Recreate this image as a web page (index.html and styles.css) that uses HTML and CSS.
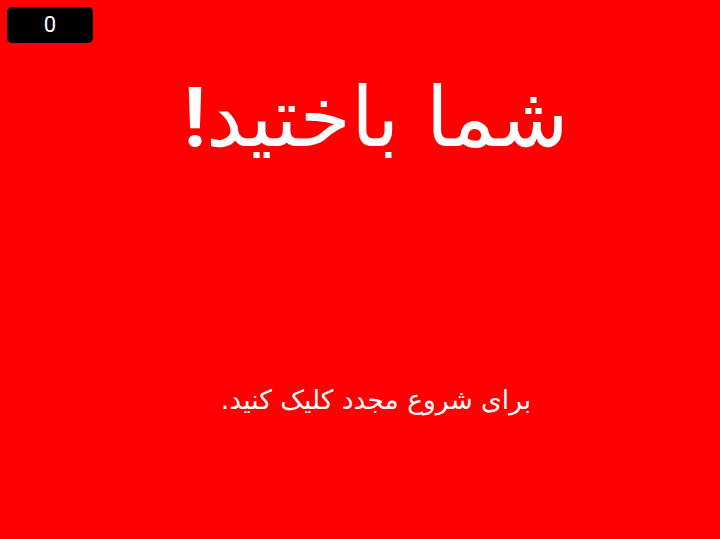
FILE: index.html
```html
<!DOCTYPE html>
<html lang="fa" dir="rtl">
<head>
<meta charset="utf-8">
<link rel="stylesheet" href="styles.css">
</head>
<body>
<div class="score">0</div>
<div class="screen">
  <h1 class="title">شما باختید<span class="bang">!</span></h1>
  <p class="hint">برای شروع مجدد کلیک کنید.</p>
</div>
</body>
</html>
```
FILE: styles.css
```css
html, body {
  margin: 0;
  padding: 0;
  width: 720px;
  height: 539px;
  background: #ff0000;
  overflow: hidden;
  font-family: "DejaVu Sans", sans-serif;
  color: #ffffff;
}
.score {
  position: absolute;
  left: 7px;
  top: 7px;
  width: 86px;
  height: 36px;
  background: #000;
  border-radius: 5px;
  color: #fff;
  font-family: Roboto, sans-serif;
  font-size: 22px;
  line-height: 36px;
  text-align: center;
  direction: ltr;
}
.screen {
  display: flex;
  flex-direction: column;
  align-items: center;
  text-align: center;
  padding-left: 32px;
}
.title {
  margin: 68px 0 0;
  font-size: 83px;
  font-weight: normal;
  line-height: 1.2;
}
.bang {
  font-family: Roboto, sans-serif;
  font-weight: bold;
}
.hint {
  margin: 216px 0 0;
  font-size: 26.5px;
}
```
